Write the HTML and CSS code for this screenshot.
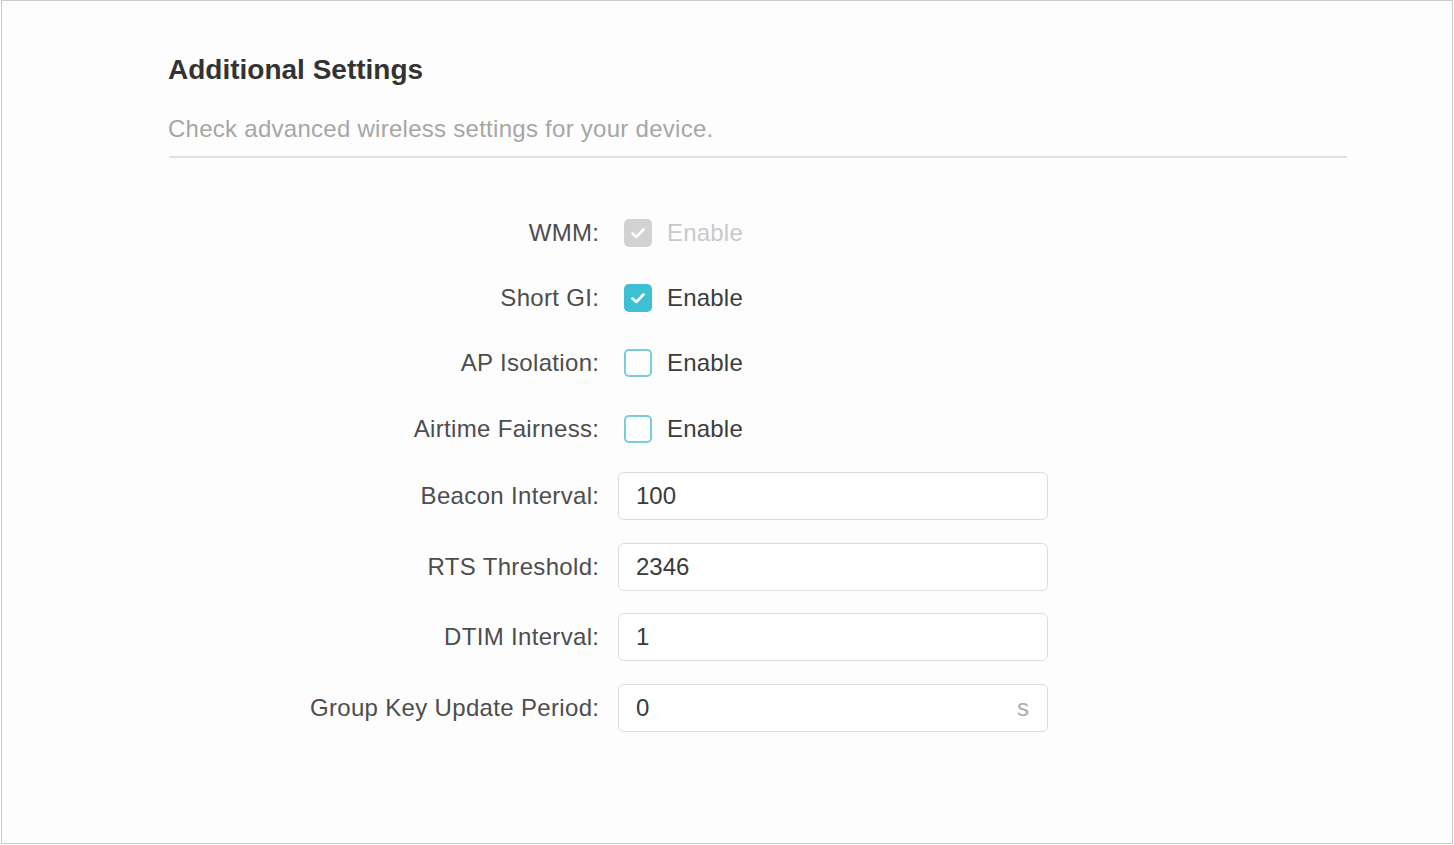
FILE: index.html
```html
<!DOCTYPE html>
<html>
<head>
<meta charset="utf-8">
<link rel="stylesheet" href="styles.css">
</head>
<body>
<div class="frame">
  <div class="panel">
    <div class="head">
      <h1 class="title">Additional Settings</h1>
      <p class="subtitle">Check advanced wireless settings for your device.</p>
    </div>
    <div class="form">
      <div class="row row-check">
        <div class="label">WMM:</div>
        <div class="control">
          <span class="box box-disabled"><svg viewBox="0 0 28 28" width="28" height="28"><path d="M8.5 14.5 L12.3 18 L19.5 10.5" fill="none" stroke="#fff" stroke-width="2.6" stroke-linecap="round" stroke-linejoin="round"/></svg></span>
          <span class="opt opt-disabled">Enable</span>
        </div>
      </div>
      <div class="row row-check">
        <div class="label">Short GI:</div>
        <div class="control">
          <span class="box box-on"><svg viewBox="0 0 28 28" width="28" height="28"><path d="M8.5 14.5 L12.3 18 L19.5 10.5" fill="none" stroke="#fff" stroke-width="2.6" stroke-linecap="round" stroke-linejoin="round"/></svg></span>
          <span class="opt">Enable</span>
        </div>
      </div>
      <div class="row row-check">
        <div class="label">AP Isolation:</div>
        <div class="control">
          <span class="box box-off"></span>
          <span class="opt">Enable</span>
        </div>
      </div>
      <div class="row row-check">
        <div class="label">Airtime Fairness:</div>
        <div class="control">
          <span class="box box-off"></span>
          <span class="opt">Enable</span>
        </div>
      </div>
      <div class="row row-input">
        <div class="label">Beacon Interval:</div>
        <div class="control"><div class="input"><span class="val">100</span></div></div>
      </div>
      <div class="row row-input">
        <div class="label">RTS Threshold:</div>
        <div class="control"><div class="input"><span class="val">2346</span></div></div>
      </div>
      <div class="row row-input">
        <div class="label">DTIM Interval:</div>
        <div class="control"><div class="input"><span class="val">1</span></div></div>
      </div>
      <div class="row row-input">
        <div class="label">Group Key Update Period:</div>
        <div class="control"><div class="input"><span class="val">0</span><span class="unit">s</span></div></div>
      </div>
    </div>
  </div>
</div>
</body>
</html>
```

FILE: styles.css
```css
* { box-sizing: border-box; }
html, body { margin: 0; padding: 0; background: #ffffff; }
body {
  font-family: "Liberation Sans", Arial, sans-serif;
  color: #4a4a4a;
}
.frame {
  margin: 0 0 0 1px;
  width: 1452px;
  height: 844px;
  border: 1px solid #cbcbcb;
  background: #fdfdfd;
}
.panel {
  padding: 52px 105px 0 167px;
}
.head {
  border-bottom: 2px solid #e2e2e2;
  padding-bottom: 12px;
}
.title {
  margin: 0 0 0 -1px;
  font-size: 28px;
  line-height: 34px;
  font-weight: bold;
  color: #333333;
}
.subtitle {
  margin: 27px 0 0 -1px;
  font-size: 24px;
  line-height: 30px;
  letter-spacing: 0.27px;
  color: #a6a6a6;
}
.form {
  margin-top: 42px;
  display: flex;
  flex-direction: column;
}
.row {
  display: grid;
  grid-template-columns: 430px 430px;
  column-gap: 19px;
  align-items: center;
}
.row-check { height: 65.3px; }
.row-input { height: 70.4px; }
.label {
  text-align: right;
  font-size: 24px;
  line-height: 28px;
  letter-spacing: 0.33px;
  margin-right: -0.33px;
  color: #4d4d4d;
}
.control {
  display: flex;
  align-items: center;
}
.box {
  width: 28px;
  height: 28px;
  border-radius: 5px;
  margin-left: 6px;
  display: flex;
}
.box svg { display: block; }
.box-disabled { background: #d2d2d2; }
.box-on { background: #3dc1d2; }
.box-off { border: 2px solid #75cdd8; background: #fff; }
.opt {
  margin-left: 15px;
  font-size: 24px;
  line-height: 28px;
  letter-spacing: 0.2px;
  color: #3c3c3c;
}
.opt-disabled { color: #c9c9c9; }
.input {
  width: 430px;
  height: 48px;
  border: 1.5px solid #dcdcdc;
  border-radius: 6px;
  background: #fff;
  display: flex;
  align-items: center;
  justify-content: space-between;
  padding: 0 18px 0 17px;
  font-size: 24px;
  line-height: 28px;
}
.val { color: #3a3a3a; }
.unit { color: #ababab; }
```
